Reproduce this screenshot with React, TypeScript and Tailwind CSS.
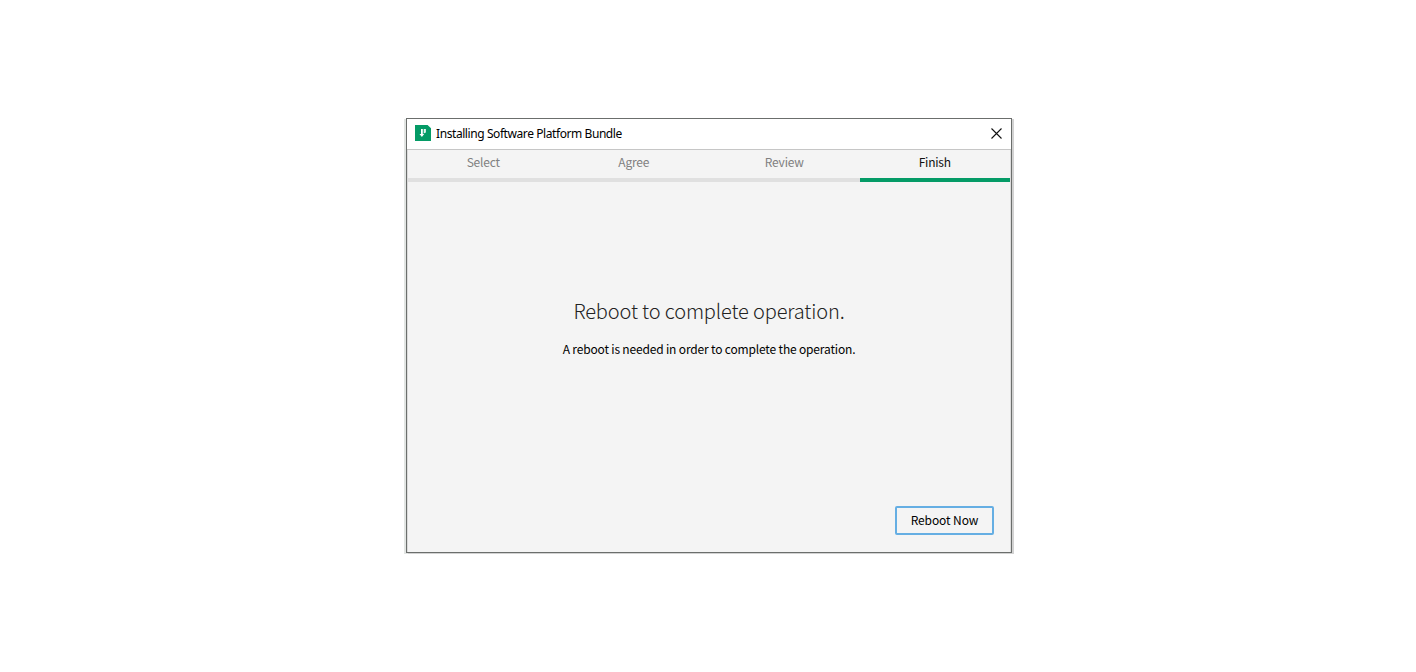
const STEPS = ["Select", "Agree", "Review", "Finish"];
const ACTIVE = "Finish";

function BundleIcon() {
  return (
    <svg width="16" height="16" viewBox="0 0 16 16" className="block">
      <path d="M0 0H12.6L16 3.2V16H0Z" fill="#049b66" />
      <path d="M6 4H7.8V9H9.2L6.9 11.9L4.5 9H6Z" fill="#fff" />
      <path d="M8.7 4H10.9V7.6L8.7 8.6Z" fill="#e3f5ee" />
    </svg>
  );
}

function CloseIcon() {
  return (
    <svg width="11" height="11" viewBox="0 0 11 11" className="block">
      <path d="M0.5 0.5L10.5 10.5M10.5 0.5L0.5 10.5" stroke="#111" strokeWidth="1.1" fill="none" />
    </svg>
  );
}

export default function App() {
  return (
    <div className="flex h-[672px] w-[1416px] justify-center overflow-hidden bg-white pt-[118px] pl-[2px] font-['Noto_Sans_CJK_SC',sans-serif]">
      <div className="flex h-[435px] w-[606px] flex-col border border-[#6b6e6c] bg-[#f4f4f4] shadow-[2px_1px_0_#d2d2d2,-2px_1px_0_#e2e5e3]">
        <header className="flex h-[31px] shrink-0 items-center justify-between border-b border-[#c6c6c6] bg-white pr-[9.5px] pl-2">
          <div className="flex items-center gap-[5px] pb-[2px]">
            <BundleIcon />
            <h1 className="pt-[2px] text-[12px] leading-4 tracking-[-0.42px] whitespace-nowrap text-black font-['Noto_Sans',sans-serif]">
              Installing Software Platform Bundle
            </h1>
          </div>
          <button aria-label="Close" className="pb-px">
            <CloseIcon />
          </button>
        </header>
        <div className="flex min-h-0 flex-1 flex-col border-x border-[#dcdcdc]">
          <nav className="grid h-8 shrink-0 grid-cols-4">
            {STEPS.map((step) => (
              <div
                key={step}
                className={
                  step === ACTIVE
                    ? "border-b-4 border-[#049b66] pt-[2px] text-center text-[12px] leading-5 tracking-[-0.2px] text-[#111]"
                    : "border-b-4 border-[#e0e0e0] pt-[2px] text-center text-[12px] leading-5 tracking-[-0.2px] text-[#808080]"
                }
              >
                {step}
              </div>
            ))}
          </nav>
          <main className="flex flex-1 flex-col items-center pt-[113px]">
            <h2 className="text-[20px] leading-8 font-light tracking-[-0.14px] whitespace-nowrap text-[#222]">
              Reboot to complete operation.
            </h2>
            <p className="mt-[12px] text-[12px] leading-5 tracking-[-0.17px] whitespace-nowrap text-black">
              A reboot is needed in order to complete the operation.
            </p>
          </main>
          <footer className="flex justify-end pr-[16px] pb-[17px]">
            <button className="h-[29px] w-[99px] rounded-[2px] border-2 border-[#65aee3] pb-[2px] text-[12px] leading-5 tracking-[-0.1px] text-black">
              Reboot Now
            </button>
          </footer>
        </div>
      </div>
    </div>
  );
}
